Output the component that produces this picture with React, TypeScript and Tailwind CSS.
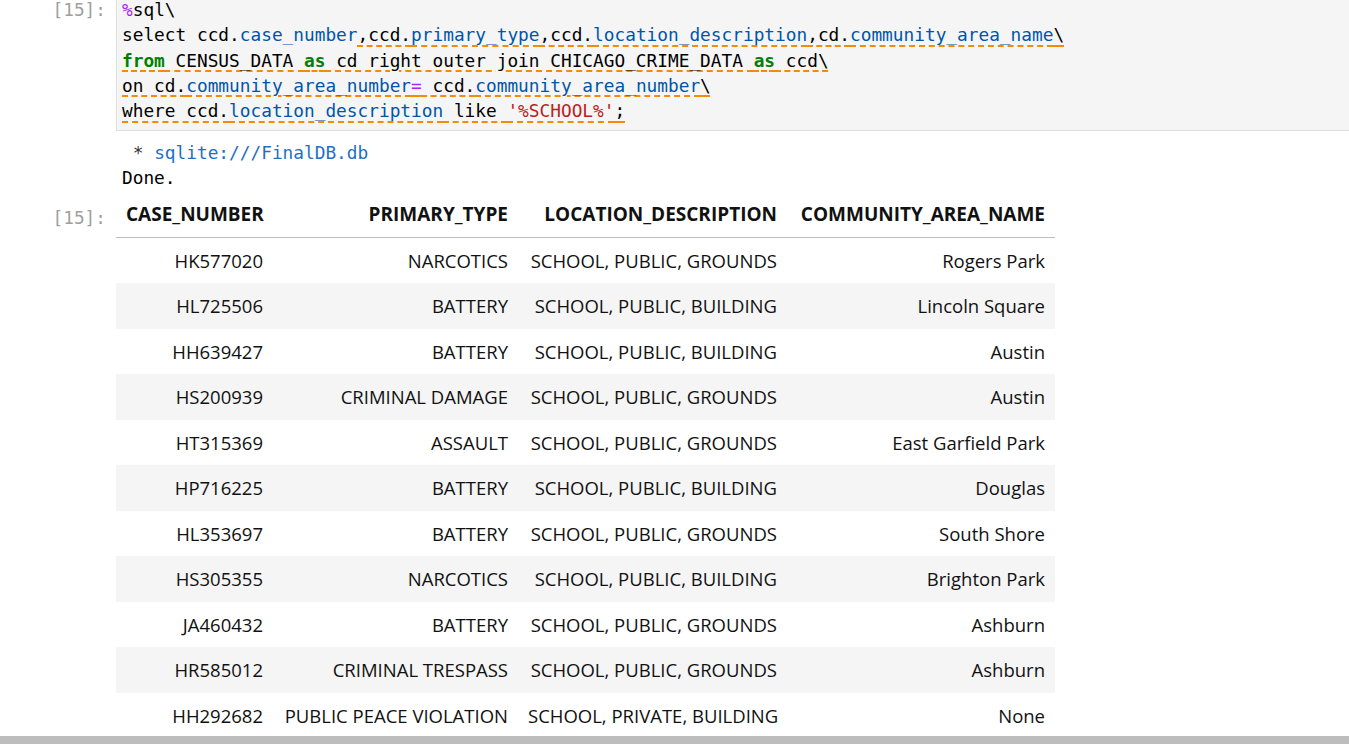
import React from 'react';

const mono = "font-['DejaVu_Sans_Mono','Liberation_Mono',monospace]";

const rows: [string, string, string, string][] = [
  ['HK577020', 'NARCOTICS', 'SCHOOL, PUBLIC, GROUNDS', 'Rogers Park'],
  ['HL725506', 'BATTERY', 'SCHOOL, PUBLIC, BUILDING', 'Lincoln Square'],
  ['HH639427', 'BATTERY', 'SCHOOL, PUBLIC, BUILDING', 'Austin'],
  ['HS200939', 'CRIMINAL DAMAGE', 'SCHOOL, PUBLIC, GROUNDS', 'Austin'],
  ['HT315369', 'ASSAULT', 'SCHOOL, PUBLIC, GROUNDS', 'East Garfield Park'],
  ['HP716225', 'BATTERY', 'SCHOOL, PUBLIC, BUILDING', 'Douglas'],
  ['HL353697', 'BATTERY', 'SCHOOL, PUBLIC, GROUNDS', 'South Shore'],
  ['HS305355', 'NARCOTICS', 'SCHOOL, PUBLIC, BUILDING', 'Brighton Park'],
  ['JA460432', 'BATTERY', 'SCHOOL, PUBLIC, GROUNDS', 'Ashburn'],
  ['HR585012', 'CRIMINAL TRESPASS', 'SCHOOL, PUBLIC, GROUNDS', 'Ashburn'],
  ['HH292682', 'PUBLIC PEACE VIOLATION', 'SCHOOL, PRIVATE, BUILDING', 'None'],
];

const P = ({ children }: { children: React.ReactNode }) => <span className="text-[#0055aa]">{children}</span>;
const K = ({ children }: { children: React.ReactNode }) => <span className="text-[#008000] font-bold">{children}</span>;
const Op = ({ children }: { children: React.ReactNode }) => <span className="text-[#aa22ff]">{children}</span>;
const S = ({ children }: { children: React.ReactNode }) => <span className="text-[#ba2121]">{children}</span>;
const U = ({ children }: { children: React.ReactNode }) => (
  <span className="underline decoration-dashed decoration-[#f58a07] decoration-2 underline-offset-[4px]">{children}</span>
);

function Prompt({ className = '' }: { className?: string }) {
  return (
    <div className={`w-[116px] shrink-0 text-right pr-[10px] text-[#a0a0a0] text-[17.8px] leading-[25px] ${mono} ${className}`}>
      [15]:
    </div>
  );
}

export default function App() {
  return (
    <div className="h-[744px] w-full flex flex-col overflow-hidden bg-white text-black">
      <div className="flex-1 overflow-hidden">
        {/* input cell */}
        <div className="flex -mt-[8px]">
          <Prompt className="pt-[5px]" />
          <div className={`flex-1 bg-[#f5f5f5] border-l border-t border-b border-[#e0e0e0] pl-[5px] pt-[4px] pb-[7px] ${mono} text-[17.8px] leading-[25.3px] whitespace-pre`}>
            <div><Op>%</Op>sql\</div>
            <div>
              select ccd.<P>case_number</P>
              <U>,ccd.<P>primary_type</P>,ccd.<P>location_description</P>,cd.<P>community_area_name</P>\</U>
            </div>
            <div>
              <U><K>from</K> CENSUS_DATA <K>as</K> cd right outer join CHICAGO_CRIME_DATA <K>as</K> ccd\</U>
            </div>
            <div>
              <U>on cd.<P>community_area_number</P><Op>=</Op> ccd.<P>community_area_number</P>\</U>
            </div>
            <div>
              <U>where ccd.<P>location_description</P> like <S>'%SCHOOL%'</S>;</U>
            </div>
          </div>
        </div>

        {/* stream output */}
        <div className="flex mt-[9px]">
          <div className="w-[116px] shrink-0" />
          <div className={`pl-[6px] ${mono} text-[17.8px] leading-[25px] whitespace-pre`}>
            <div>
              <span className="text-[#333]"> * </span>
              <span className="text-[#1f6fc5]">sqlite:///FinalDB.db</span>
            </div>
            <div>Done.</div>
          </div>
        </div>

        {/* result table */}
        <div className="flex mt-[1.5px]">
          <Prompt className="pt-[13px]" />
          <table className="w-[939px] shrink-0 table-fixed border-collapse font-['Open_Sans','Noto_Sans',sans-serif] text-[18.5px] text-[#111]">
            <colgroup>
              <col className="w-[157px]" />
              <col className="w-[245px]" />
              <col className="w-[269px]" />
              <col className="w-[268px]" />
            </colgroup>
            <thead>
              <tr className="h-[46px] border-b border-[#bdbdbd]">
                {['CASE_NUMBER', 'PRIMARY_TYPE', 'LOCATION_DESCRIPTION', 'COMMUNITY_AREA_NAME'].map(h => (
                  <th key={h} className="text-right font-bold text-[19px] px-[10px] whitespace-nowrap">{h}</th>
                ))}
              </tr>
            </thead>
            <tbody>
              {rows.map((r, i) => (
                <tr key={r[0]} className={i % 2 === 1 ? 'h-[45.5px] bg-[#f5f5f5]' : 'h-[45.5px]'}>
                  {r.map((c, j) => (
                    <td key={j} className="text-right px-[10px] whitespace-nowrap">{c}</td>
                  ))}
                </tr>
              ))}
            </tbody>
          </table>
        </div>
      </div>
      <div className="h-[8px] shrink-0 bg-[#bdbdbd]" />
    </div>
  );
}
